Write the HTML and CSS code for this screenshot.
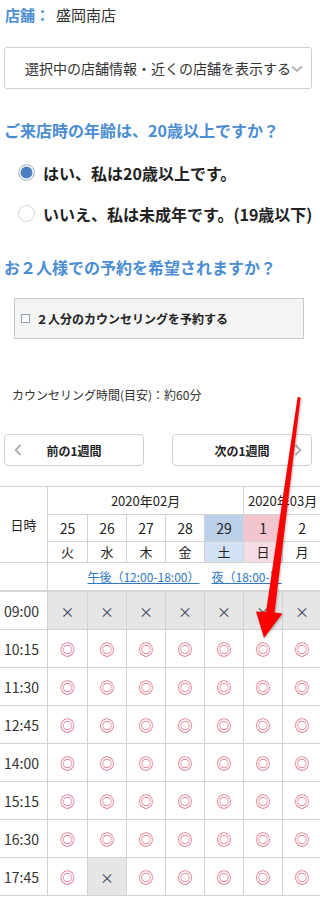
FILE: index.html
```html
<!DOCTYPE html>
<html lang="ja">
<head>
<meta charset="utf-8">
<title>予約</title>
<link rel="stylesheet" href="styles.css">
</head>
<body>
<div class="store"><span class="store-label">店舗：</span><span class="store-name">盛岡南店</span></div>

<div class="select">
  <span class="select-text">選択中の店舗情報・近くの店舗を表示する</span>
  <svg class="select-chev" width="12" height="8" viewBox="0 0 12 8"><path d="M1 1.5 L6 6 L11 1.5" fill="none" stroke="#b3b3b3" stroke-width="2"/></svg>
</div>

<h2 class="question q-age">ご来店時の年齢は、20歳以上ですか？</h2>
<div class="radios">
  <label class="radio"><span class="dot dot-on"></span><span class="radio-text">はい、私は20歳以上です。</span></label>
  <label class="radio"><span class="dot"></span><span class="radio-text">いいえ、私は未成年です。(19歳以下)</span></label>
</div>

<h2 class="question q-pair">お２人様での予約を希望されますか？</h2>
<div class="pair"><span class="box"></span><span class="pair-text">２人分のカウンセリングを予約する</span></div>

<p class="duration">カウンセリング時間(目安)：約60分</p>

<div class="weeknav">
  <div class="navbtn">
    <svg class="nav-chev" width="8" height="12" viewBox="0 0 8 12"><path d="M6.5 1 L1.8 6 L6.5 11" fill="none" stroke="#b0b0b0" stroke-width="2"/></svg>
    <span class="nav-text">前の1週間</span>
    <span></span>
  </div>
  <div class="navbtn">
    <span></span>
    <span class="nav-text">次の1週間</span>
    <svg class="nav-chev" width="8" height="12" viewBox="0 0 8 12"><path d="M1.5 1 L6.2 6 L1.5 11" fill="none" stroke="#b0b0b0" stroke-width="2"/></svg>
  </div>
</div>

<table class="cal">
  <colgroup>
    <col class="c-time"><col class="c-first"><col class="c-day"><col class="c-day"><col class="c-day"><col class="c-day"><col class="c-day"><col class="c-day">
  </colgroup>
  <thead>
    <tr class="r-month">
      <th class="h-label" rowspan="3">日時</th>
      <th colspan="5">2020年02月</th>
      <th colspan="2">2020年03月</th>
    </tr>
    <tr class="r-date">
      <th>25</th><th>26</th><th>27</th><th>28</th><th class="sat">29</th><th class="sun">1</th><th>2</th>
    </tr>
    <tr class="r-wday">
      <th>火</th><th>水</th><th>木</th><th>金</th><th class="sat-l">土</th><th class="sun-l">日</th><th>月</th>
    </tr>
    <tr class="r-links">
      <th></th>
      <th colspan="7" class="links"><a href="#">午後（12:00-18:00）</a><a href="#">夜（18:00-）</a></th>
    </tr>
  </thead>
  <tbody>
    <tr><td class="time">09:00</td><td class="ng">×</td><td class="ng">×</td><td class="ng">×</td><td class="ng">×</td><td class="ng">×</td><td class="ng">×</td><td class="ng">×</td></tr>
    <tr><td class="time">10:15</td><td class="ok">◎</td><td class="ok">◎</td><td class="ok">◎</td><td class="ok">◎</td><td class="ok">◎</td><td class="ok">◎</td><td class="ok">◎</td></tr>
    <tr><td class="time">11:30</td><td class="ok">◎</td><td class="ok">◎</td><td class="ok">◎</td><td class="ok">◎</td><td class="ok">◎</td><td class="ok">◎</td><td class="ok">◎</td></tr>
    <tr><td class="time">12:45</td><td class="ok">◎</td><td class="ok">◎</td><td class="ok">◎</td><td class="ok">◎</td><td class="ok">◎</td><td class="ok">◎</td><td class="ok">◎</td></tr>
    <tr><td class="time">14:00</td><td class="ok">◎</td><td class="ok">◎</td><td class="ok">◎</td><td class="ok">◎</td><td class="ok">◎</td><td class="ok">◎</td><td class="ok">◎</td></tr>
    <tr><td class="time">15:15</td><td class="ok">◎</td><td class="ok">◎</td><td class="ok">◎</td><td class="ok">◎</td><td class="ok">◎</td><td class="ok">◎</td><td class="ok">◎</td></tr>
    <tr><td class="time">16:30</td><td class="ok">◎</td><td class="ok">◎</td><td class="ok">◎</td><td class="ok">◎</td><td class="ok">◎</td><td class="ok">◎</td><td class="ok">◎</td></tr>
    <tr><td class="time">17:45</td><td class="ok">◎</td><td class="ng">×</td><td class="ok">◎</td><td class="ok">◎</td><td class="ok">◎</td><td class="ok">◎</td><td class="ok">◎</td></tr>
  </tbody>
</table>

<svg class="arrow" width="320" height="900" viewBox="0 0 320 900">
  <polygon points="297.6,397 300.6,397.4 274.6,612.5 282.5,613.5 264,638 256,611.5 266,612" fill="#ff0000"/>
</svg>
</body>
</html>
```
FILE: styles.css
```css
html, body {
  margin: 0;
  padding: 0;
}
body {
  position: relative;
  overflow-x: hidden;
  background: #fff;
  color: #333;
  font-family: "Noto Sans CJK JP", "Noto Sans", sans-serif;
  font-size: 13px;
}

.store {
  height: 30px;
  line-height: 30px;
  padding-left: 5px;
  font-size: 15px;
  white-space: nowrap;
}
.store-label {
  color: #4a8dd2;
  font-weight: bold;
}
.store-name {
  margin-left: 6px;
  color: #333;
}

.select {
  box-sizing: border-box;
  margin: 17px 0 0 4px;
  width: 308px;
  height: 42px;
  border: 1px solid #cfcfcf;
  border-radius: 3px;
  padding-left: 20px;
  display: flex;
  align-items: center;
  white-space: nowrap;
  overflow: hidden;
}
.select-text {
  font-size: 14px;
  color: #333;
}
.select-chev {
  flex: none;
  margin-top: 1px;
}

.question {
  margin: 0;
  padding-left: 4px;
  height: 24px;
  line-height: 24px;
  font-size: 16px;
  font-weight: bold;
  color: #4a8dd2;
  white-space: nowrap;
}
.q-age { margin-top: 29px; }
.q-pair { margin-top: 21px; }

.radios {
  margin-top: 10px;
}
.radio {
  display: flex;
  align-items: center;
  height: 41px;
  padding-left: 18px;
  white-space: nowrap;
}
.dot {
  box-sizing: border-box;
  flex: none;
  width: 17px;
  height: 17px;
  border-radius: 50%;
  border: 1px solid #d4d4d4;
  background: #fff;
  margin-right: 8px;
}
.dot-on {
  background: #4a7fc2;
  box-shadow: inset 0 0 0 1.5px #fff;
  border-color: #c9c9c9;
}
.radio-text {
  font-size: 16px;
  font-weight: bold;
  color: #222;
}

.pair {
  box-sizing: border-box;
  margin: 19px 0 0 14px;
  width: 290px;
  height: 41px;
  background: #f4f4f4;
  border: 1px solid #c9c9c9;
  display: flex;
  align-items: center;
  padding-left: 6px;
  white-space: nowrap;
}
.box {
  box-sizing: border-box;
  flex: none;
  width: 9px;
  height: 9px;
  border: 1px solid #8e9fb0;
  background: #fff;
  margin-right: 6px;
}
.pair-text {
  font-size: 12px;
  font-weight: bold;
  color: #222;
}

.duration {
  margin: 46px 0 0 0;
  padding-left: 12px;
  height: 20px;
  line-height: 20px;
  font-size: 12px;
  color: #333;
  white-space: nowrap;
}

.weeknav {
  margin-top: 29px;
  padding: 0 8px 0 4px;
  display: flex;
  justify-content: space-between;
}
.navbtn {
  box-sizing: border-box;
  width: 140px;
  height: 32px;
  border: 1px solid #cfcfcf;
  border-radius: 4px;
  display: grid;
  grid-template-columns: 18px 1fr 18px;
  align-items: center;
  justify-items: center;
  padding: 0 4px;
}
.nav-text {
  font-size: 12px;
  font-weight: bold;
  color: #222;
  white-space: nowrap;
}

.cal {
  margin-top: 20px;
  border-collapse: separate;
  border-spacing: 0;
  table-layout: fixed;
  width: 322px;
  border-top: 1px solid #d2d2d2;
}
.c-time { width: 48px; }
.c-first { width: 40px; }
.c-day { width: 39px; }

.cal th, .cal td {
  box-sizing: border-box;
  padding: 0;
  border-right: 1px solid #d2d2d2;
  border-bottom: 1px solid #d2d2d2;
  text-align: center;
  vertical-align: middle;
  white-space: nowrap;
  overflow: hidden;
}
.cal th {
  font-weight: normal;
  color: #222;
}
.r-month { height: 28px; }
.r-month th { font-size: 13px; }
.h-label { font-size: 13px; }
.r-date { height: 27px; }
.r-date th { font-size: 14px; }
.r-wday { height: 21px; }
.r-wday th { font-size: 13px; line-height: 18px; }
.r-links { height: 29px; }
.r-links th { border-bottom: 2px solid #d6d6d6; }
.links {
  font-size: 12px;
}
.links a {
  color: #2f78c4;
  text-decoration: underline;
  margin: 0 6px;
}
.sat { background: #bcd1e9; }
.sat-l { background: #d2e2f3; }
.sun { background: #f2c5ce; }
.sun-l { background: #f8dce3; }

.cal tbody tr { height: 38px; }
.cal .time {
  text-align: left;
  padding-left: 4px;
  font-size: 14px;
  color: #333;
}
.cal .ok {
  color: #dc3f68;
  font-size: 15px;
}
.cal .ng {
  background: #e6e6e6;
  color: #3e4a5a;
  font-size: 14px;
}

.arrow {
  position: absolute;
  left: 0;
  top: 0;
  pointer-events: none;
  filter: drop-shadow(1px 1px 1px rgba(0, 0, 0, 0.25));
}
```
